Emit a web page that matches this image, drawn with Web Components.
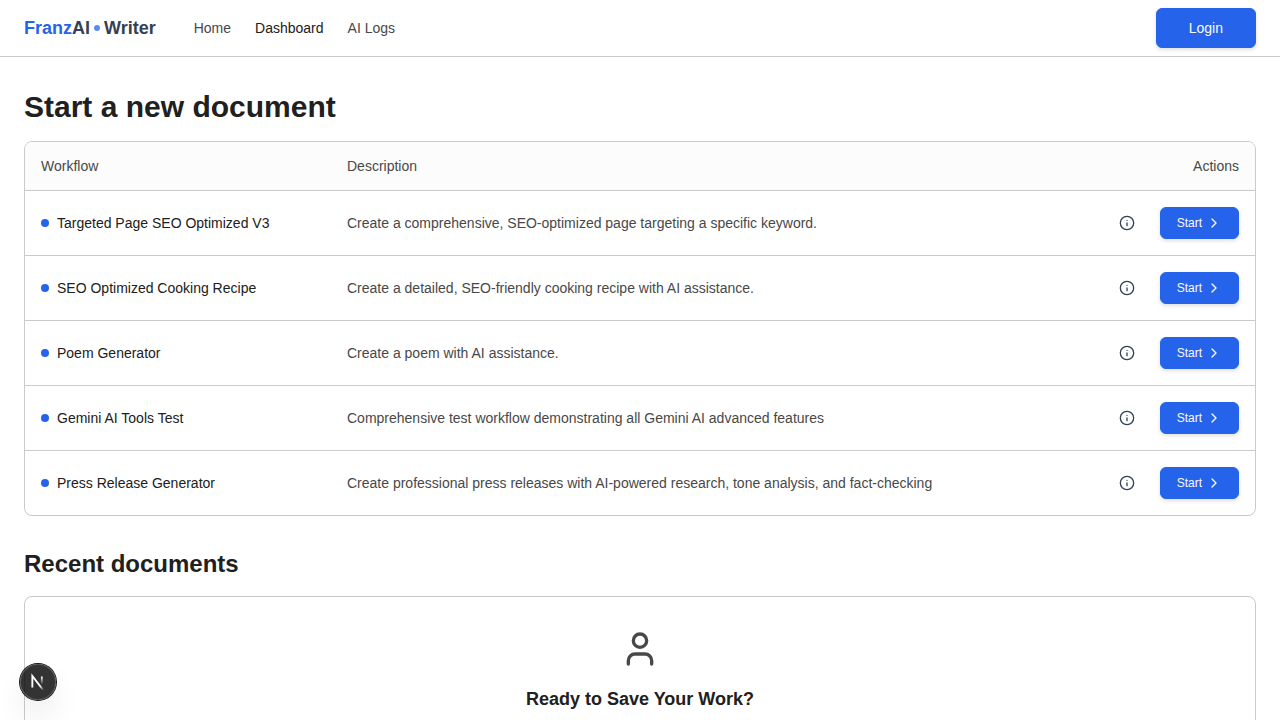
<!DOCTYPE html>
<html lang="en">
<head>
<meta charset="utf-8">
<meta name="viewport" content="width=device-width, initial-scale=1">
<title>FranzAI Writer</title>
<style>
  body {
    margin: 0;
    background: #fff;
    color: #202020;
    font: 14px/20px "Liberation Sans", Arial, Helvetica, sans-serif;
    --accent: #2563eb;
    --line: #cacaca;
    --text: #202020;
    --muted: #484848;
    --slate: #334155;
  }
</style>
</head>
<body>
<fw-app></fw-app>

<script>
const define = (name, html, setup) =>
  customElements.define(name, class extends HTMLElement {
    constructor() {
      super();
      const tpl = document.createElement("template");
      tpl.innerHTML = html;
      this.attachShadow({ mode: "open" }).append(tpl.content.cloneNode(true));
    }
    connectedCallback() { if (setup) setup(this, this.shadowRoot); }
  });

define("fw-dot", `
  <style>
    :host { display: block; flex: none; width: 8px; height: 8px; border-radius: 50%; background: var(--accent); }
    :host([small]) { width: 6px; height: 6px; background: #5b8af5; }
  </style>`);

define("fw-logo", `
  <style>
    :host { display: block; }
    a { display: flex; align-items: center; gap: 4px; color: var(--slate); text-decoration: none; font-size: 18px; line-height: 28px; font-weight: 700; }
    b { color: var(--accent); }
  </style>
  <a href="#"><span><b>Franz</b>AI</span><fw-dot small></fw-dot><span>Writer</span></a>`);

define("fw-nav-link", `
  <style>
    :host { display: block; }
    a { color: var(--muted); text-decoration: none; }
    :host([current]) a { color: var(--text); }
  </style>
  <a href="#"><slot></slot></a>`);

define("fw-button", `
  <style>
    :host { display: block; }
    button {
      display: flex; align-items: center; justify-content: center; gap: 4px;
      box-sizing: border-box; height: 40px; padding: 0 32px; border: 1px solid var(--accent); border-radius: 6px;
      background: var(--accent); color: #fafafa; font: inherit; cursor: pointer;
      box-shadow: 0 2px 4px rgba(0, 0, 0, .12);
    }
    :host([small]) button { height: 32px; padding: 0 16px; font-size: 12px; line-height: 16px; }
  </style>
  <button type="button"><slot></slot></button>`);

define("fw-info-button", `
  <style>
    :host { display: block; }
    button { display: flex; align-items: center; height: 32px; padding: 0 17px; border: 0; background: none; color: var(--slate); cursor: pointer; }
    svg { display: block; }
  </style>
  <button type="button" aria-label="Workflow details">
    <svg width="16" height="16" viewBox="0 0 24 24" fill="none" stroke="currentColor" stroke-width="2" stroke-linecap="round" stroke-linejoin="round"><circle cx="12" cy="12" r="10"/><path d="M12 16v-4M12 8h.01"/></svg>
  </button>`);

define("fw-header", `
  <style>
    :host { display: block; border-bottom: 1px solid var(--line); background: #fff; }
    header { display: flex; align-items: center; gap: 38px; height: 56px; padding: 0 24px; }
    nav { display: flex; gap: 24px; flex: 1; }
  </style>
  <header>
    <fw-logo></fw-logo>
    <nav>
      <fw-nav-link>Home</fw-nav-link>
      <fw-nav-link current>Dashboard</fw-nav-link>
      <fw-nav-link>AI Logs</fw-nav-link>
    </nav>
    <fw-button>Login</fw-button>
  </header>`);

const workflows = [
  ["Targeted Page SEO Optimized V3", "Create a comprehensive, SEO-optimized page targeting a specific keyword."],
  ["SEO Optimized Cooking Recipe", "Create a detailed, SEO-friendly cooking recipe with AI assistance."],
  ["Poem Generator", "Create a poem with AI assistance."],
  ["Gemini AI Tools Test", "Comprehensive test workflow demonstrating all Gemini AI advanced features"],
  ["Press Release Generator", "Create professional press releases with AI-powered research, tone analysis, and fact-checking"],
];

define("fw-workflow-table", `
  <style>
    :host { display: block; border: 1px solid var(--line); border-radius: 8px; overflow: hidden; }
    table { width: 100%; border-collapse: separate; border-spacing: 0; }
    th { height: 48px; padding: 0 16px; background: #fcfcfc; font-weight: 400; text-align: left; color: var(--muted); }
    th:first-child { width: 274px; }
    th:last-child { text-align: right; }
    td { height: 64px; padding: 0 16px; border-top: 1px solid var(--line); color: var(--muted); }
    td:first-child { color: var(--text); }
    .name, .actions { display: flex; align-items: center; gap: 8px; }
    .actions { justify-content: flex-end; }
    svg { display: block; }
  </style>
  <table>
    <thead><tr><th scope="col">Workflow</th><th scope="col">Description</th><th scope="col">Actions</th></tr></thead>
    <tbody></tbody>
  </table>`, (host, root) => {
  root.querySelector("tbody").innerHTML = workflows.map(([name, text]) => `
    <tr>
      <td><div class="name"><fw-dot></fw-dot><span>${name}</span></div></td>
      <td>${text}</td>
      <td><div class="actions">
        <fw-info-button></fw-info-button>
        <fw-button small>Start <svg width="16" height="16" viewBox="0 0 24 24" fill="none" stroke="currentColor" stroke-width="2" stroke-linecap="round" stroke-linejoin="round"><path d="m9 18 6-6-6-6"/></svg></fw-button>
      </div></td>
    </tr>`).join("");
});

define("fw-sign-in-card", `
  <style>
    :host { display: flex; flex-direction: column; align-items: center; gap: 16px; padding: 32px; border: 1px solid var(--line); border-radius: 8px; }
    svg { display: block; color: var(--muted); }
    h3 { margin: 0; font-size: 18px; line-height: 28px; font-weight: 700; }
  </style>
  <svg width="40" height="40" viewBox="0 0 24 24" fill="none" stroke="currentColor" stroke-width="2" stroke-linecap="round" stroke-linejoin="round"><path d="M19 21v-2a4 4 0 0 0-4-4H9a4 4 0 0 0-4 4v2"/><circle cx="12" cy="7" r="4"/></svg>
  <h3>Ready to Save Your Work?</h3>`);

define("fw-dev-badge", `
  <style>
    :host { position: fixed; left: 20px; bottom: 20px; }
    button {
      display: grid; place-items: center; width: 36px; height: 36px; padding: 0; border: 0; border-radius: 50%;
      background: rgba(0, 0, 0, .8); color: #fff; cursor: pointer;
      box-shadow: 0 0 0 1px #171717, inset 0 0 0 1px rgba(255, 255, 255, .14), 0 16px 32px -8px rgba(0, 0, 0, .24);
    }
    svg { display: block; }
  </style>
  <button type="button" aria-label="Open developer tools">
    <svg width="36" height="36" viewBox="0 0 36 36" fill="none">
      <defs>
        <linearGradient id="diag" x1="9.96" y1="11.12" x2="15.48" y2="17.97" gradientUnits="userSpaceOnUse"><stop stop-color="#fff"/><stop offset=".604" stop-color="#fff" stop-opacity="0"/></linearGradient>
        <linearGradient id="bar" x1="11.82" y1="1.4" x2="11.79" y2="9.63" gradientUnits="userSpaceOnUse"><stop stop-color="#fff"/><stop offset="1" stop-color="#fff" stop-opacity="0"/></linearGradient>
      </defs>
      <g transform="translate(10 11)" stroke-width="1.86">
        <path d="M13.3 15.2 2.34 1v11.6" stroke="url(#diag)"/>
        <path d="M11.825 1.5v11.6" stroke="url(#bar)"/>
      </g>
    </svg>
  </button>`);

define("fw-app", `
  <style>
    :host { display: block; }
    main { padding: 32px 24px; }
    h1, h2 { margin: 0 0 16px; font-weight: 700; }
    h1 { font-size: 30px; line-height: 36px; }
    h2 { margin-top: 32px; font-size: 24px; line-height: 32px; }
  </style>
  <fw-header></fw-header>
  <main>
    <h1>Start a new document</h1>
    <fw-workflow-table></fw-workflow-table>
    <h2>Recent documents</h2>
    <fw-sign-in-card></fw-sign-in-card>
  </main>
  <fw-dev-badge></fw-dev-badge>`);
</script>
</body>
</html>
